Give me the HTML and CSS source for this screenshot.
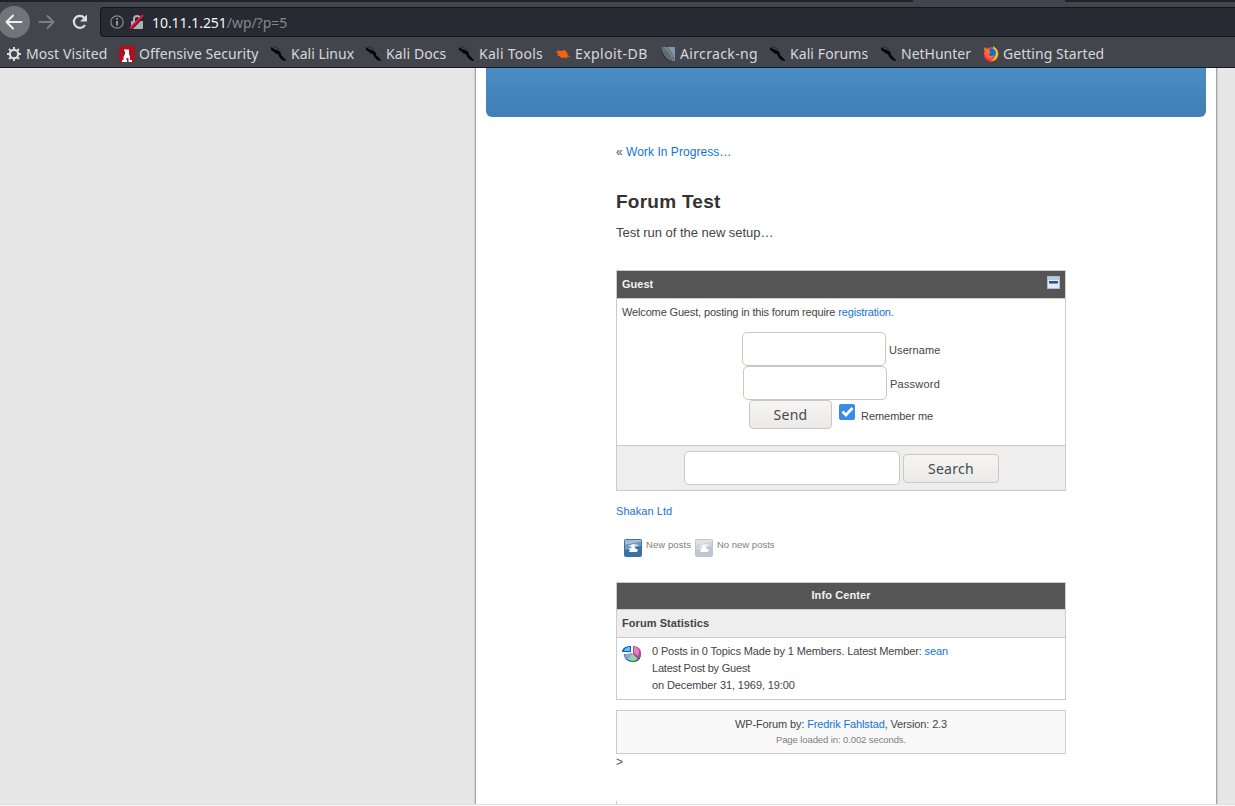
FILE: index.html
```html
<!DOCTYPE html>
<html lang="en">
<head>
<meta charset="utf-8">
<title>Forum Test</title>
<link rel="stylesheet" href="styles.css">
</head>
<body>
<svg class="defs" width="0" height="0">
  <symbol id="kali" viewBox="0 0 16 16"><path fill="#050505" d="M0 1l3 2 4 1.500 2.500 1.500.5 3 2 2 3 3v1l-4-1-3-3.500-1-2.500-2.500-.5-2-2L0 4z"/><path d="M2 .5l4 1.500 2.500 2" fill="none" stroke="#24262a" stroke-width=".8"/></symbol>
</svg>
<div class="browser">
  <div class="tabstrip"><div class="active-tab"></div></div>
  <div class="toolbar">
    <span class="back"><svg width="32" height="32" viewBox="0 0 32 32"><path d="M23.500 16H9M15 9.500L8.500 16l6.500 6.500" fill="none" stroke="#f0f0f1" stroke-width="2" stroke-linecap="round" stroke-linejoin="round"/></svg></span>
    <svg class="forward" width="18" height="16" viewBox="0 0 18 16"><path d="M1.500 8h14M9.500 2l6 6-6 6" fill="none" stroke="#7c7e84" stroke-width="2" stroke-linecap="round" stroke-linejoin="round"/></svg>
    <svg class="reload" width="18" height="18" viewBox="0 0 18 18"><path d="M13.300 4.800A6 6 0 1 0 14 12" fill="none" stroke="#dddde0" stroke-width="2.200"/><path d="M16 1.500v7H9z" fill="#dddde0"/></svg>
    <div class="urlbar">
      <svg width="14" height="14" viewBox="0 0 14 14"><circle cx="7" cy="7" r="6.200" fill="none" stroke="#8a8b91" stroke-width="1.200"/><path d="M7 6v4.500M7 3.300v1.500" stroke="#b4b5b9" stroke-width="1.600"/></svg>
      <svg class="lock" width="16" height="16" viewBox="0 0 16 16"><path d="M5 8V5a3 3 0 0 1 6 0v3" fill="none" stroke="#b1b1b3" stroke-width="2"/><rect x="2" y="7" width="12" height="8" rx="1" fill="#b1b1b3"/><path d="M2 15.500L15 2" stroke="#272933" stroke-width="2"/><path d="M1 14.500L14 1" stroke="#f0103c" stroke-width="2.200"/></svg>
      <span class="url"><b>10.11.1.251</b>/wp/?p=5</span>
    </div>
  </div>
  <div class="bookmarks">
    <span class="bm w1"><svg viewBox="0 0 16 16"><circle cx="8" cy="8" r="4.200" fill="none" stroke="#dcdcde" stroke-width="2.200"/><path d="M8 1v3M8 12v3M1 8h3M12 8h3M3 3l2.200 2.200M10.800 10.800L13 13M13 3l-2.200 2.200M5.200 10.800L3 13" stroke="#dcdcde" stroke-width="1.900"/></svg><span>Most Visited</span></span>
    <span class="bm w2"><svg viewBox="0 0 16 16"><path fill="#b3101f" d="M0 0h16v16H0z"/><path fill="#fff" d="M5 3.500h5V8l1 3v3h2v2H9.500v-4h-2v2H8v2H3v-2h1.500v-3L6 8V5H5z"/></svg><span>Offensive Security</span></span>
    <span class="bm w3"><svg><use href="#kali"/></svg><span>Kali Linux</span></span>
    <span class="bm w4"><svg><use href="#kali"/></svg><span>Kali Docs</span></span>
    <span class="bm w5"><svg><use href="#kali"/></svg><span>Kali Tools</span></span>
    <span class="bm w6"><svg viewBox="0 0 16 16"><path fill="#ee6411" d="M0 5.500l3 .5L2 3.500 5 5l5-1 1.500 2 1.500 2-1 .5L15.500 11l-3.500-.5.5 2-3-1-3 .5-2-2L2 9.500 3.500 8z"/></svg><span>Exploit-DB</span></span>
    <span class="bm w7"><svg viewBox="0 0 16 16"><path fill="#6a7378" d="M1 1h14v14h-5z"/><path fill="#263038" d="M1 1c0 7 3 12 9 15l4-3C10 11 5 6 1 1z"/><path fill="#5d6b78" d="M1 1c3 0 9 6 12 13l-3 1C5 12 2 7 1 1z"/><path fill="#7595bd" d="M7 1h8v14C13 8 11 4 7 1z"/><path d="M4 1c5 4 7 7 9 14M10 1l5 6" fill="none" stroke="#a29b84" stroke-width=".8"/></svg><span>Aircrack-ng</span></span>
    <span class="bm w8"><svg><use href="#kali"/></svg><span>Kali Forums</span></span>
    <span class="bm w9"><svg><use href="#kali"/></svg><span>NetHunter</span></span>
    <span class="bm w10"><svg viewBox="0 0 16 16"><circle cx="8" cy="8.500" r="7.200" fill="#ff4838"/><path fill="#ffb820" d="M10 0c5 3 6.500 7 4.500 11-1.500 3-4 4.500-7 4 4-1 5-5 3-10z"/><circle cx="8.300" cy="7" r="4.600" fill="#0870d8"/><path fill="#ff6e2c" d="M1 3l1-2 2 2h3L6 5l2 1-2 2c0 2 3 3 5 1 0 3-6 5-8 1z"/><path fill="#ed1665" d="M.8 7c1 5 4 7 8 8-4 1.500-8.500-1-8-8z"/></svg><span>Getting Started</span></span>
  </div>
</div>
<div class="viewport">
  <div class="page">
    <div class="banner"></div>
    <div class="content">
      <div class="navigation">« <a>Work In Progress…</a></div>
      <h2>Forum Test</h2>
      <p class="entry">Test run of the new setup…</p>

      <div class="table login">
        <div class="head guest"><span>Guest</span>
          <svg width="13" height="13" viewBox="0 0 13 13"><path fill="#a9bfd3" d="M0 0h13v13H0z"/><path fill="#b9cbdc" d="M1 1h11v3H1z"/><path fill="#e3ecf4" d="M1 4h11v8H1z"/><path fill="#285882" d="M2 5h9v2H2z"/><path fill="#7c9dbc" d="M2 7h9v1H2z"/></svg>
        </div>
        <div class="login-body">
          <div class="welcome">Welcome Guest, posting in this forum require <a>registration.</a></div>
          <div class="row"><span class="input"></span><span class="user">Username</span></div>
          <div class="row second"><span class="input"></span><span class="pass">Password</span></div>
          <div class="row send"><span class="button">Send</span>
            <svg width="16" height="16" viewBox="0 0 16 16"><rect width="16" height="16" rx="2" fill="#3c8ae8"/><path d="M3.500 7.500l3.500 3.500 6.500-7" fill="none" stroke="#fff" stroke-width="2.700"/></svg>
            <span class="remember">Remember me</span></div>
        </div>
        <div class="search"><span class="input wide"></span><span class="button find">Search</span></div>
      </div>

      <div class="crumb"><a>Shakan Ltd</a></div>
      <div class="legend">
        <svg width="18" height="18" viewBox="0 0 18 18"><rect width="18" height="18" rx="2" fill="#3d70a4"/><path fill="#a3bdd4" d="M1 1h16v2L1 6z"/><path fill="#7299bf" d="M1 6l16-3v4L1 11z"/><path fill="#e8eff5" d="M4 7l5-2 6 1-4 1.500-3 .5z"/><path fill="#fff" d="M9 6l3 4 2 .500-1 2.500H5l1-2-2-1 3-1z"/></svg>
        <span class="new">New posts</span>
        <svg width="18" height="18" viewBox="0 0 18 18"><rect width="18" height="18" rx="2" fill="#c0c6cf"/><path fill="#dfe3e8" d="M1 1h16v2L1 6z"/><path fill="#cfd5dc" d="M1 6l16-3v4L1 11z"/><path fill="#f1f3f5" d="M4 7l5-2 6 1-4 1.500-3 .5z"/><path fill="#fff" d="M9 6l3 4 2 .500-1 2.500H5l1-2-2-1 3-1z"/></svg>
        <span class="nonew">No new posts</span>
      </div>

      <div class="table info">
        <div class="head center"><span class="ic">Info Center</span></div>
        <div class="subhead"><span class="fs">Forum Statistics</span></div>
        <div class="stats">
          <svg width="20" height="18" viewBox="0 0 20 18"><path fill="#315a55" d="M2 9h17c0 5-3 8-8 8S2 14 2 9z"/><path fill="#8aa4ea" d="M10.500 8L2.500 9c0 3 1.500 5 4 6z"/><path fill="#8fd5a5" d="M10.500 8L6 14.500c3 2 7 2 10-.5z"/><path fill="#b04a9c" d="M11 9V1c5 0 8 3 8 7 0 3-1 5-3 6z"/><path fill="#df83bd" d="M12 8V2c3 0 5 2 5 5l-1 4z"/><path fill="#1256c9" d="M9 1v6H0c0-4 4-6 9-6z"/><path fill="#55c9fa" d="M8 2v4H2c0-2 3-4 6-4z"/></svg>
          <div class="lines">
            <div><span class="l1">0 Posts in 0 Topics Made by 1 Members. Latest Member: <a>sean</a></span></div>
            <div><span class="l2">Latest Post by Guest</span></div>
            <div><span class="l3">on December 31, 1969, 19:00</span></div>
          </div>
        </div>
      </div>

      <div class="credits">
        <div><span class="c1">WP-Forum by: <a>Fredrik Fahlstad</a>, Version: 2.3</span></div>
        <div class="small"><span class="c2">Page loaded in: 0.002 seconds.</span></div>
      </div>
      <div class="stray">&gt;</div>
      <div class="next-box"></div>
    </div>
  </div>
</div>
</body>
</html>
```
FILE: styles.css
```css
* { box-sizing: border-box; }
body { margin: 0; height: 806px; overflow: hidden; background: #fff; font-family: "Liberation Sans", Arial, sans-serif; }
svg { display: block; flex: none; }
.defs { position: absolute; }
a { color: #1273d8; }

.browser { height: 68px; background: #43454d; border-bottom: 1px solid #14161d; font-family: "Noto Sans", sans-serif; color: #d8d8da; }
.tabstrip { height: 2px; background: #20222b; padding-left: 913px; }
.active-tab { width: 152px; height: 2px; background: #43454d; }
.toolbar { height: 38px; display: flex; align-items: center; padding-top: 2px; }
.back { width: 32px; height: 32px; margin-left: -2px; border-radius: 50%; background: #737479; }
.forward { margin-left: 8px; }
.reload { margin-left: 15px; }
.urlbar { flex: 1; height: 30px; margin-left: 11px; padding-left: 9px; background: #272933; border: 1px solid #14161d; border-right: 0; border-radius: 4px 0 0 4px; display: flex; align-items: center; }
.lock { margin-left: 5px; }
.url { margin-left: 7px; padding-top: 1px; font-size: 14px; line-height: 28px; color: #85868c; white-space: nowrap; letter-spacing: -.05px; }
.url b { font-weight: 400; color: #f4f4f5; }
.bookmarks { height: 27px; display: flex; align-items: center; gap: 12px; padding-left: 6px; }
.bm { display: flex; align-items: center; gap: 4px; font-size: 14px; line-height: 26px; white-space: nowrap; flex: none; }
.bm svg { width: 16px; height: 16px; }
.w1 { width: 101px; letter-spacing: .08px; }
.w2 { width: 140px; letter-spacing: .05px; }
.w3 { width: 83px; }
.w4 { width: 81px; letter-spacing: .1px; }
.w5 { width: 84px; letter-spacing: .25px; }
.w6 { width: 93px; letter-spacing: .43px; }
.w7 { width: 98px; letter-spacing: .35px; }
.w8 { width: 99px; letter-spacing: .08px; }
.w9 { width: 90px; }
.w10 { width: 121px; letter-spacing: .04px; }

.viewport { height: 737px; background: #e7e7e7; border-bottom: 1px solid #ddd; }
.page { width: 742px; height: 736px; margin-left: 475px; background: #fff; border: solid #a3a3a3; border-width: 0 1px; box-shadow: 0 0 2px #aaa; clip-path: inset(0 -4px 0 -4px); }
.banner { height: 49px; margin: 0 10px; background: linear-gradient(#4a8cc5, #407fb5); border-radius: 0 0 6px 6px; }
.content { width: 450px; margin-left: 140px; padding-top: 25px; color: #444; font-size: 11px; }
.navigation { font-size: 12px; line-height: 20px; color: #555; letter-spacing: .04px; }
h2 { margin: 27px 0 0; font-size: 19px; line-height: 25px; color: #333; letter-spacing: .25px; }
.entry { margin: 9px 0 0; font-size: 13px; line-height: 20px; letter-spacing: -.03px; }
.table { border: 1px solid #ccc; }
.login { margin-top: 27px; height: 221px; }
.head { background: #555; color: #f2f2f2; font-weight: 700; border-bottom: 1px solid #ccc; }
.guest { height: 28px; display: flex; justify-content: space-between; padding: 5px 5px 0; line-height: 17px; }
.login-body { height: 146px; padding-top: 5px; }
.welcome { padding-left: 5px; line-height: 17px; height: 28px; white-space: nowrap; letter-spacing: -.15px; }
.row { display: flex; padding-left: 125px; height: 34px; line-height: 36px; }
.second { padding-left: 126px; }
.user { letter-spacing: .1px; }
.pass { letter-spacing: .22px; }
.input { width: 144px; height: 34px; border: 1px solid #cdc7c2; border-radius: 5px; background: #fff; margin-right: 3px; flex: none; }
.send { padding-left: 132px; }
.button { width: 83px; height: 29px; border: 1px solid #cdc7c2; border-radius: 4px; background: linear-gradient(#f6f5f4, #eaeae8); font: 14px/27px "Noto Sans", sans-serif; text-align: center; color: #444a4e; letter-spacing: .3px; }
.send svg { margin: 4px 6px 0 7px; }
.send .remember { line-height: 32px; letter-spacing: -.05px; }
.search { height: 45px; border-top: 1px solid #ccc; background: #eee; display: flex; padding: 5px 0 0 67px; }
.wide { width: 216px; }
.find { width: 96px; margin-top: 3px; }
.crumb { margin-top: 10px; line-height: 20px; letter-spacing: .05px; }
.legend { display: flex; margin-top: 18px; padding-left: 8px; height: 18px; font-size: 9.500px; line-height: 12px; color: #808080; white-space: nowrap; }
.new { width: 49px; margin-left: 4px; letter-spacing: .08px; }
.nonew { margin-left: 4px; }
.info { margin-top: 25px; height: 118px; }
.center { height: 27px; text-align: center; line-height: 25px; }
.ic { letter-spacing: .1px; }
.subhead { height: 28px; background: #eee; border-bottom: 1px solid #ccc; font-weight: 700; line-height: 27px; padding-left: 5px; letter-spacing: .06px; }
.stats { display: flex; padding: 5px 0 0 5px; line-height: 17px; white-space: nowrap; }
.stats svg { margin-top: 2px; margin-right: 10px; }
.l1 { letter-spacing: -.145px; }
.l2 { letter-spacing: -.2px; }
.l3 { letter-spacing: -.1px; }
.c1 { letter-spacing: -.13px; }
.c2 { letter-spacing: -.1px; }
.credits { margin-top: 10px; height: 44px; border: 1px solid #ccc; background: #f9f9f9; text-align: center; line-height: 17px; padding-top: 5px; }
.small { font-size: 9.500px; line-height: 14px; color: #808080; }
.stray { font-size: 12px; line-height: 16px; color: #555; }
.next-box { margin-top: 31px; height: 3px; border-left: 1px solid #ccc; }
```
